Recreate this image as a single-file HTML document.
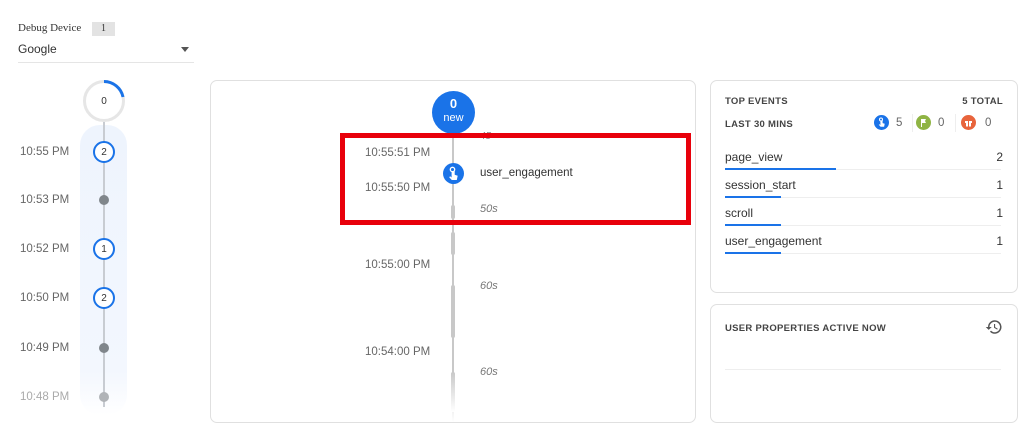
<!DOCTYPE html>
<html><head><style>
body{margin:0;width:1024px;height:432px;background:#fff;font-family:"Liberation Sans",sans-serif;position:relative;overflow:hidden;color:#333}
.a{position:absolute}
.t{font-size:11.5px;color:#666}
.card{position:absolute;border:1px solid #e0e0e0;border-radius:7px;background:#fff;box-sizing:border-box}
.c{position:absolute;border-radius:50%;box-sizing:border-box}
.ev{font-size:12px;color:#333}
.bar{position:absolute;height:2px;background:#1a73e8}
.sep{position:absolute;height:1px;background:#eee;left:14px;width:276px}
.cap{font-size:9.5px;font-weight:bold;color:#444;letter-spacing:.3px}
</style></head><body>
<div class="a" style="left:18px;top:22px;font-family:'Liberation Serif',serif;font-size:11px;color:#333">Debug Device</div>
<div class="a" style="left:92px;top:22px;width:23px;height:14px;background:#e3e3e3;font-family:'Liberation Serif',serif;font-size:10px;text-align:center;line-height:14px">1</div>
<div class="a" style="left:18px;top:42px;font-size:12px;color:#333">Google</div>
<div class="a" style="left:181px;top:47px;border-left:4px solid transparent;border-right:4px solid transparent;border-top:5px solid #555"></div>
<div class="a" style="left:18px;top:62px;width:176px;height:1px;background:#e5e5e5"></div>

<div class="a" style="left:80px;top:125px;width:47px;height:290px;border-radius:20px;background:linear-gradient(#eef4fd,#f3f7fe 85%,#fff)"></div>
<div class="a" style="left:103px;top:122px;width:2px;height:285px;background:#c8ccd2"></div>
<div class="c" style="left:83px;top:80px;width:42px;height:42px;border:3px solid #e6e6e6;background:#fff"></div>
<svg class="a" style="left:83px;top:80px" width="42" height="42"><path d="M21 1.5 A19.5 19.5 0 0 1 40 17" fill="none" stroke="#1a73e8" stroke-width="3"/></svg>
<div class="a" style="left:83px;top:96px;width:42px;text-align:center;font-size:10px">0</div>

<div class="t a" style="left:20px;top:146px">10:55 PM</div>
<div class="c" style="left:93px;top:141px;width:22px;height:22px;border:2px solid #1a73e8;background:#fff;font-size:10px;text-align:center;line-height:19px">2</div>
<div class="t a" style="left:20px;top:194px">10:53 PM</div>
<div class="c" style="left:99px;top:195px;width:10px;height:10px;background:#80868b"></div>
<div class="t a" style="left:20px;top:243px">10:52 PM</div>
<div class="c" style="left:93px;top:238px;width:22px;height:22px;border:2px solid #1a73e8;background:#fff;font-size:10px;text-align:center;line-height:19px">1</div>
<div class="t a" style="left:20px;top:292px">10:50 PM</div>
<div class="c" style="left:93px;top:287px;width:22px;height:22px;border:2px solid #1a73e8;background:#fff;font-size:10px;text-align:center;line-height:19px">2</div>
<div class="t a" style="left:20px;top:342px">10:49 PM</div>
<div class="c" style="left:99px;top:343px;width:10px;height:10px;background:#80868b"></div>
<div class="t a" style="left:20px;top:391px;color:#aaa">10:48 PM</div>
<div class="c" style="left:99px;top:392px;width:10px;height:10px;background:#b0b3b7"></div>

<div class="card" style="left:210px;top:80px;width:486px;height:343px"></div>
<div class="a" style="left:452px;top:130px;width:2px;height:292px;background:linear-gradient(#c8c8c8 85%,#fff)"></div>
<div class="a" style="left:451px;top:205px;width:4px;height:14px;background:#c8c8c8;border-radius:2px"></div>
<div class="a" style="left:451px;top:232px;width:4px;height:23px;background:#c8c8c8;border-radius:2px"></div>
<div class="a" style="left:451px;top:285px;width:4px;height:53px;background:#c8c8c8;border-radius:2px"></div>
<div class="a" style="left:451px;top:372px;width:4px;height:40px;background:linear-gradient(#c8c8c8,#fff);border-radius:2px"></div>
<div class="c" style="left:432px;top:91px;width:43px;height:43px;background:#1a73e8;color:#fff;text-align:center;font-weight:bold;font-size:13px;padding-top:6px;line-height:13px">0<br><span style="font-weight:normal;font-size:11px">new</span></div>
<div class="a" style="left:480px;top:131px;font-size:10px;color:#888;font-style:italic">45</div>
<div class="t a" style="left:365px;top:147px">10:55:51 PM</div>
<div class="t a" style="left:365px;top:182px">10:55:50 PM</div>
<div class="c" style="left:443px;top:163px;width:21px;height:21px;background:#1a73e8"></div>
<svg class="a" style="left:443px;top:163px" width="21" height="21"><circle cx="9.5" cy="6.5" r="2.2" fill="none" stroke="#fff" stroke-width="1.3"/><path d="M8.6 8v6.5l-1.5-1.2-.9.9 2.6 2.8h5l.9-4.2-3-1V8z" fill="#fff"/></svg>
<div class="ev a" style="left:480px;top:167px;font-size:11.5px">user_engagement</div>
<div class="a" style="left:480px;top:203px;font-size:11px;color:#777;font-style:italic">50s</div>
<div class="a" style="left:340px;top:133px;width:341px;height:82px;border:5px solid #e8000b"></div>
<div class="t a" style="left:365px;top:259px">10:55:00 PM</div>
<div class="a" style="left:480px;top:280px;font-size:11px;color:#777;font-style:italic">60s</div>
<div class="t a" style="left:365px;top:346px">10:54:00 PM</div>
<div class="a" style="left:480px;top:366px;font-size:11px;color:#777;font-style:italic">60s</div>

<div class="card" style="left:710px;top:80px;width:308px;height:213px">
<div class="a cap" style="left:14px;top:15px">TOP EVENTS</div>
<div class="a cap" style="right:14px;top:15px">5 TOTAL</div>
<div class="a cap" style="left:14px;top:38px">LAST 30 MINS</div>
<div class="c" style="left:163px;top:34px;width:15px;height:15px;background:#1a73e8"></div>
<svg class="a" style="left:163px;top:34px" width="15" height="15"><circle cx="7" cy="4.5" r="1.5" fill="none" stroke="#fff"/><path d="M6.4 5.5v4.5l-1-.8-.6.6 1.8 2h3.5l.6-3-2.1-.7V5.5z" fill="#fff"/></svg>
<div class="a t" style="left:185px;top:36px">5</div>
<div class="a" style="left:201px;top:33px;width:1px;height:18px;background:#eee"></div>
<div class="c" style="left:205px;top:34px;width:15px;height:15px;background:#8fb444"></div>
<svg class="a" style="left:205px;top:34px" width="15" height="15"><path d="M5 4h5l-1 2 1 2H6v4H5z" fill="#fff"/></svg>
<div class="a t" style="left:227px;top:36px">0</div>
<div class="a" style="left:244px;top:33px;width:1px;height:18px;background:#eee"></div>
<div class="c" style="left:250px;top:34px;width:15px;height:15px;background:#e8643c"></div>
<svg class="a" style="left:250px;top:34px" width="15" height="15"><path d="M4 6h7v2H4zM5 8h5v3.5H5z" fill="#fff"/><path d="M7.5 6V11.5" stroke="#e8643c"/></svg>
<div class="a t" style="left:274px;top:36px">0</div>
<div class="a ev" style="left:14px;top:69px">page_view</div><div class="a ev" style="right:14px;top:69px">2</div>
<div class="sep" style="top:88px"></div><div class="bar" style="left:14px;top:87px;width:111px"></div>
<div class="a ev" style="left:14px;top:97px">session_start</div><div class="a ev" style="right:14px;top:97px">1</div>
<div class="sep" style="top:116px"></div><div class="bar" style="left:14px;top:115px;width:56px"></div>
<div class="a ev" style="left:14px;top:125px">scroll</div><div class="a ev" style="right:14px;top:125px">1</div>
<div class="sep" style="top:144px"></div><div class="bar" style="left:14px;top:143px;width:56px"></div>
<div class="a ev" style="left:14px;top:153px">user_engagement</div><div class="a ev" style="right:14px;top:153px">1</div>
<div class="sep" style="top:172px"></div><div class="bar" style="left:14px;top:171px;width:56px"></div>
</div>

<div class="card" style="left:710px;top:304px;width:308px;height:119px">
<div class="a cap" style="left:14px;top:18px">USER PROPERTIES ACTIVE NOW</div>
<svg class="a" style="left:274px;top:13px" width="18" height="18" viewBox="0 0 24 24"><path d="M13 3a9 9 0 0 0-9 9H1l3.9 3.9L9 12H6a7 7 0 1 1 2 4.9l-1.4 1.4A9 9 0 1 0 13 3zm-1 5v5l4.3 2.5.7-1.2-3.5-2.1V8z" fill="#555"/></svg>
<div class="a" style="left:14px;top:64px;width:276px;height:1px;background:#eee"></div>
</div>
</body></html>
